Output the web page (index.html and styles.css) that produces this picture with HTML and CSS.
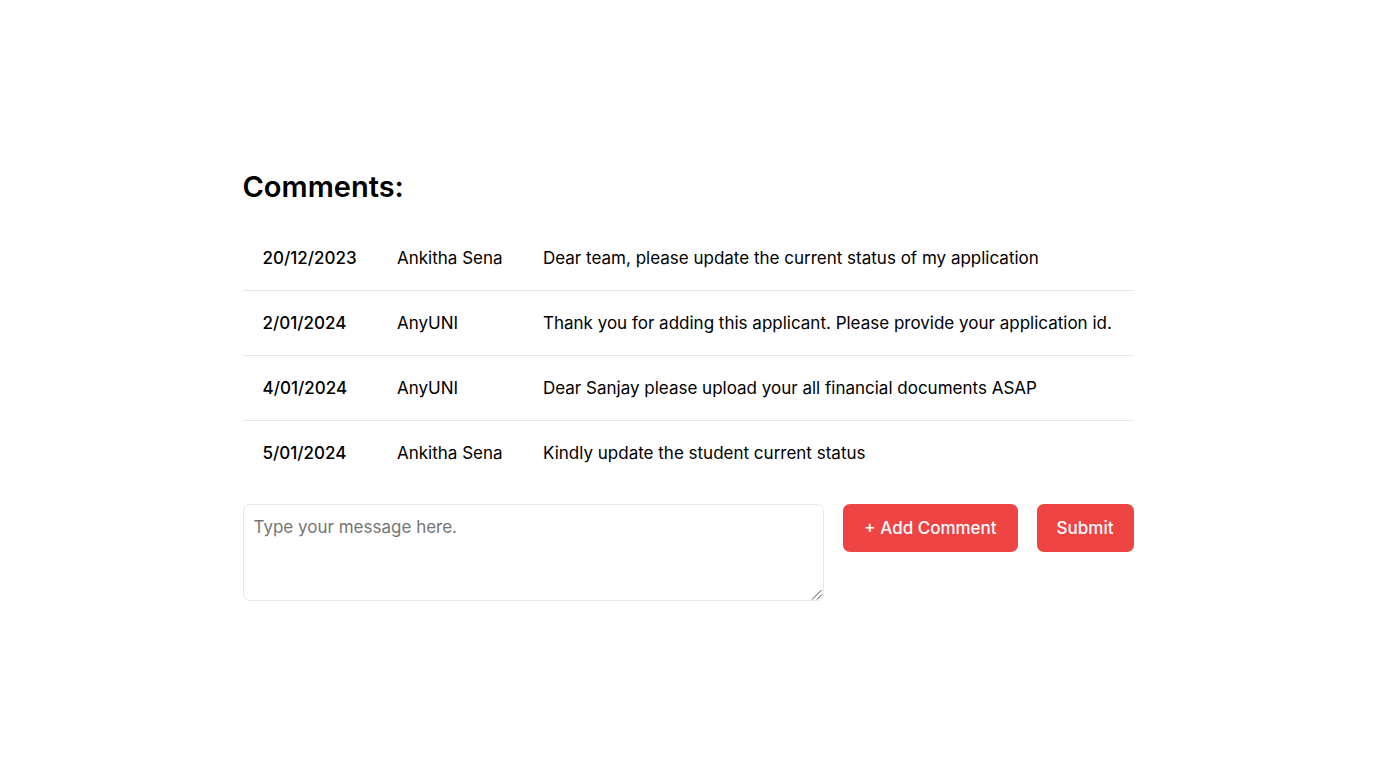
FILE: index.html
```html
<!DOCTYPE html>
<html lang="en">
<head>
<meta charset="utf-8">
<meta name="viewport" content="width=device-width, initial-scale=1">
<title>Comments</title>
<link rel="stylesheet" href="styles.css">
</head>
<body>
<main class="comments">
  <h1 class="comments-title">Comments:</h1>
  <table class="comments-table">
    <tbody>
      <tr><td class="date">20/12/2023</td><td>Ankitha Sena</td><td>Dear team, please update the current status of my application</td></tr>
      <tr><td class="date">2/01/2024</td><td>AnyUNI</td><td>Thank you for adding this applicant. Please provide your application id.</td></tr>
      <tr><td class="date">4/01/2024</td><td>AnyUNI</td><td>Dear Sanjay please upload your all financial documents ASAP</td></tr>
      <tr><td class="date">5/01/2024</td><td>Ankitha Sena</td><td>Kindly update the student current status</td></tr>
    </tbody>
  </table>
  <form class="composer">
    <textarea class="message" aria-label="Message" placeholder="Type your message here."></textarea>
    <button class="button button-add" type="button">+ Add Comment</button>
    <button class="button" type="submit">Submit</button>
  </form>
</main>
</body>
</html>
```
FILE: styles.css
```css
* { box-sizing: border-box; }
body {
  margin: 0;
  min-height: 100vh;
  display: flex;
  align-items: center;
  justify-content: center;
  background: #fff;
  color: #000;
  font-family: Inter, "Liberation Sans", sans-serif;
  font-size: 17px;
  line-height: 24px;
}
.comments {
  width: 100%;
  max-width: 891px;
}
.comments-title {
  margin: 0 0 20px;
  font-size: 29px;
  line-height: 39px;
  font-weight: 600;
}
.comments-table { width: 100%; border-collapse: collapse; }
.comments-table td { padding: 20px; }
.comments-table tr + tr { border-top: 1px solid #e5e7eb; }
.comments-table .date { font-weight: 500; }
.composer {
  display: flex;
  align-items: flex-start;
  gap: 19px;
  margin-top: 19px;
}
.message {
  flex: 1;
  min-width: 0;
  height: 97px;
  padding: 10px;
  border: 1px solid #e5e7eb;
  border-radius: 7px;
  background: #fff;
  color: inherit;
  font: inherit;
  resize: both;
}
.message::placeholder { color: #757575; }
.message::-webkit-resizer {
  background: url("data:image/svg+xml,%3Csvg xmlns='http://www.w3.org/2000/svg' width='15' height='15'%3E%3Cpath d='M4 14.5L13.5 5M9 14.5L14 9.5' fill='none' stroke='%23444'/%3E%3C/svg%3E") no-repeat right bottom;
}
.button {
  padding: 12px 20px;
  border: 0;
  border-radius: 7px;
  background: #ef4444;
  color: #fff;
  font: inherit;
  font-weight: 500;
}
.button-add { padding: 12px 21px; }
```
